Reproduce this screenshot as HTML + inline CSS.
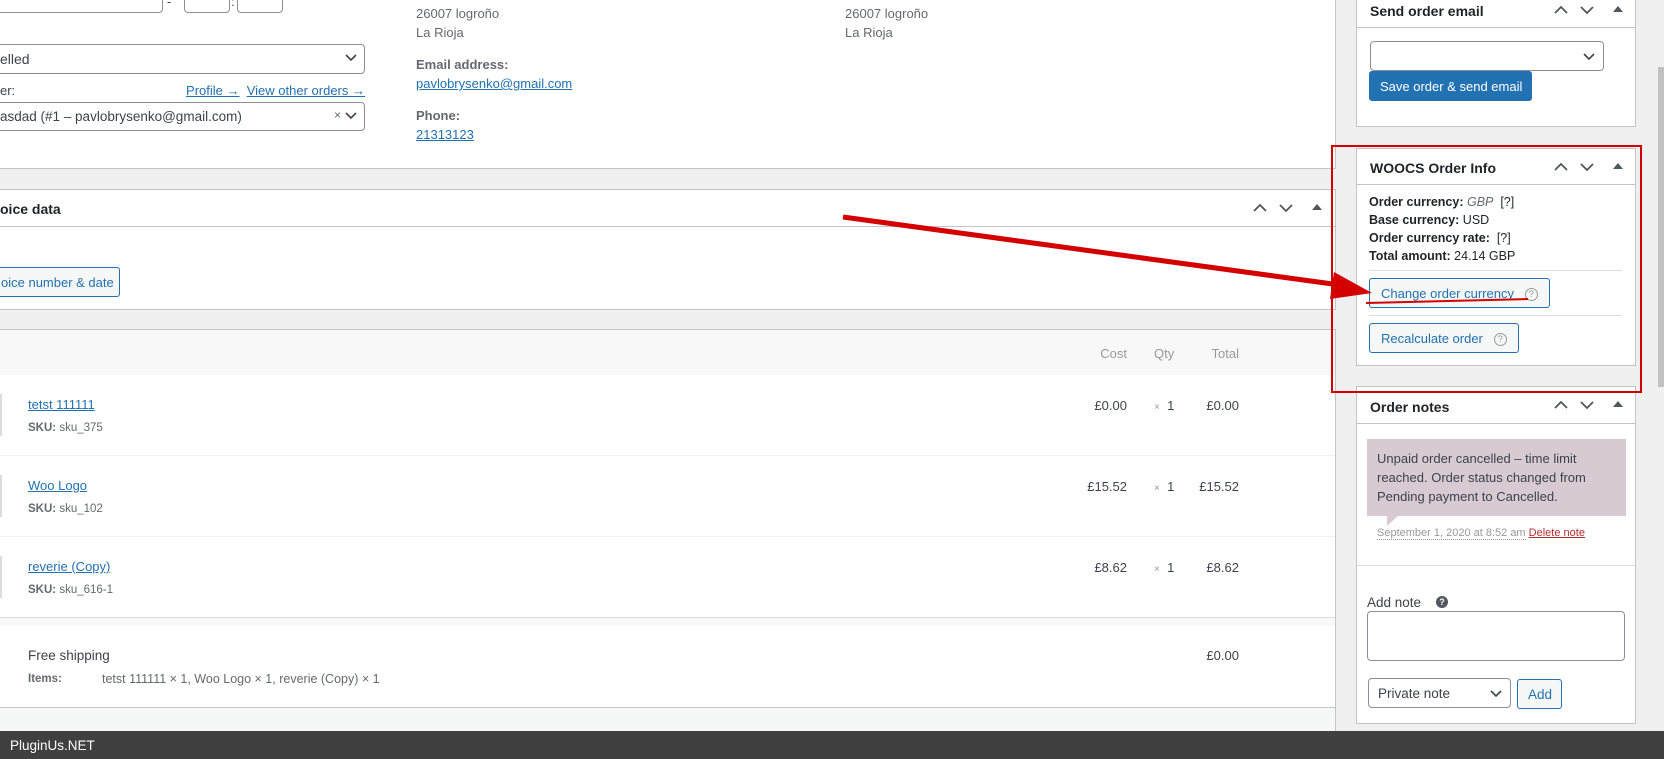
<!DOCTYPE html>
<html><head><meta charset="utf-8"><style>
*{box-sizing:border-box;margin:0;padding:0}
body{width:1664px;height:759px;overflow:hidden;background:#f0f0f1;font-family:"Liberation Sans",sans-serif;font-size:13px;color:#3c434a;position:relative}
.a{position:absolute;white-space:nowrap}
.w{position:absolute;background:#fff}
.bd{border:1px solid #c3c4c7}
a,.lk{color:#2271b1;text-decoration:underline}
.in{position:absolute;border:1px solid #8c8f94;border-radius:4px;background:#fff}
.btn{position:absolute;border:1px solid #2271b1;border-radius:3px;background:#f6f7f7;color:#2271b1;font-size:13px;white-space:nowrap}
.gr{color:#646970}
.q{display:inline-block;width:13px;height:13px;border:1.5px solid #999;border-radius:50%;font-size:9px;line-height:10px;text-align:center;color:#999;vertical-align:middle}
.bold{font-weight:bold}
</style></head><body>
<!-- main panel -->
<div class="w" style="left:0;top:-2px;width:1336px;height:171px;border-right:1px solid #c3c4c7;border-bottom:1px solid #c3c4c7"></div>
<div class="in" style="left:-10px;top:-10px;width:173px;height:23px"></div>
<div class="a" style="left:167px;top:-6px">-</div>
<div class="in" style="left:184px;top:-10px;width:46px;height:23px"></div>
<div class="a" style="left:231px;top:-6px">:</div>
<div class="in" style="left:237px;top:-10px;width:46px;height:23px"></div>
<div class="in" style="left:-10px;top:44px;width:375px;height:30px"></div>
<div class="a" style="left:0;top:51px;font-size:14px">elled</div>
<svg class="a" style="left:344px;top:53px" width="14" height="10"><path d="M2 2l5 5 5-5" stroke="#3c434a" stroke-width="1.6" fill="none"/></svg>
<div class="a" style="left:0;top:83px">er:</div>
<div class="a" style="left:150px;top:83px;width:215px;text-align:right"><span class="lk">Profile →</span>&nbsp; <span class="lk">View other orders →</span></div>
<div class="in" style="left:-10px;top:102px;width:375px;height:29px"></div>
<div class="a" style="left:0;top:109px;font-size:13.5px">asdad (#1 – pavlobrysenko@gmail.com)</div>
<div class="a gr" style="left:334px;top:108px;font-size:12px">×</div>
<svg class="a" style="left:344px;top:111px" width="14" height="10"><path d="M2 2l5 5 5-5" stroke="#3c434a" stroke-width="1.6" fill="none"/></svg>
<div class="a gr" style="left:416px;top:6px">26007 logroño</div>
<div class="a gr" style="left:416px;top:25px">La Rioja</div>
<div class="a gr bold" style="left:416px;top:57px">Email address:</div>
<div class="a lk" style="left:416px;top:76px">pavlobrysenko@gmail.com</div>
<div class="a gr bold" style="left:416px;top:108px">Phone:</div>
<div class="a lk" style="left:416px;top:127px">21313123</div>
<div class="a gr" style="left:845px;top:6px">26007 logroño</div>
<div class="a gr" style="left:845px;top:25px">La Rioja</div>

<!-- invoice data -->
<div class="w" style="left:0;top:189px;width:1336px;height:121px;border:1px solid #c3c4c7;border-left:0"></div>
<div class="a" style="left:0;top:226px;width:1335px;border-top:1px solid #c3c4c7"></div>
<div class="a bold" style="left:0;top:201px;color:#1d2327;font-size:14px">oice data</div>
<svg class="a" style="left:1252px;top:201px" width="80" height="14"><path d="M2 10l6-6 6 6M28 4l6 6 6-6" stroke="#50575e" stroke-width="1.8" fill="none"/><path d="M60 9l5-6 5 6z" fill="#50575e"/></svg>
<div class="btn" style="left:-10px;top:267px;width:130px;height:30px;padding:7px 0 0 10px">oice number &amp; date</div>

<!-- items -->
<div class="w" style="left:0;top:329px;width:1336px;height:379px;border:1px solid #c3c4c7;border-left:0"></div>
<div class="a" style="left:0;top:330px;width:1335px;height:45px;background:#f8f8f8"></div>
<div class="a" style="left:1090px;top:346px;width:37px;text-align:right;color:#999">Cost</div>
<div class="a" style="left:1154px;top:346px;color:#999">Qty</div>
<div class="a" style="left:1200px;top:346px;width:39px;text-align:right;color:#999">Total</div>
<div class="a" style="left:0;top:455px;width:1335px;border-top:1px solid #f0f0f1"></div>
<div class="a" style="left:0;top:536px;width:1335px;border-top:1px solid #f0f0f1"></div>
<div class="a" style="left:0;top:617px;width:1335px;height:9px;background:#f8f8f8;border-top:1px solid #dcdcde"></div>
<div class="a" style="left:0;top:394px;width:2px;height:42px;background:#ddd"></div>
<div class="a" style="left:0;top:475px;width:2px;height:42px;background:#ddd"></div>
<div class="a" style="left:0;top:556px;width:2px;height:42px;background:#ddd"></div>
<div class="a lk" style="left:28px;top:397px">tetst 111111</div>
<div class="a gr" style="left:28px;top:422px;font-size:11.5px"><b>SKU:</b> sku_375</div>
<div class="a lk" style="left:28px;top:478px">Woo Logo</div>
<div class="a gr" style="left:28px;top:503px;font-size:11.5px"><b>SKU:</b> sku_102</div>
<div class="a lk" style="left:28px;top:559px">reverie (Copy)</div>
<div class="a gr" style="left:28px;top:584px;font-size:11.5px"><b>SKU:</b> sku_616-1</div>
<div class="a" style="left:1060px;top:398px;width:67px;text-align:right">£0.00</div>
<div class="a" style="left:1154px;top:398px"><span style="font-size:10px;color:#999">×</span>&nbsp; 1</div>
<div class="a" style="left:1180px;top:398px;width:59px;text-align:right">£0.00</div>
<div class="a" style="left:1060px;top:479px;width:67px;text-align:right">£15.52</div>
<div class="a" style="left:1154px;top:479px"><span style="font-size:10px;color:#999">×</span>&nbsp; 1</div>
<div class="a" style="left:1180px;top:479px;width:59px;text-align:right">£15.52</div>
<div class="a" style="left:1060px;top:560px;width:67px;text-align:right">£8.62</div>
<div class="a" style="left:1154px;top:560px"><span style="font-size:10px;color:#999">×</span>&nbsp; 1</div>
<div class="a" style="left:1180px;top:560px;width:59px;text-align:right">£8.62</div>
<div class="a" style="left:28px;top:648px;font-size:13.5px">Free shipping</div>
<div class="a gr bold" style="left:28px;top:673px;font-size:11.5px">Items:</div>
<div class="a gr" style="left:102px;top:672px;font-size:12.5px">tetst 111111 × 1, Woo Logo × 1, reverie (Copy) × 1</div>
<div class="a" style="left:1180px;top:648px;width:59px;text-align:right">£0.00</div>
<div class="a" style="left:0;top:708px;width:1336px;height:23px;background:#f6f7f7;border-right:1px solid #c3c4c7"></div>

<!-- sidebar: send email -->
<div class="w bd" style="left:1356px;top:-2px;width:280px;height:129px"></div>
<div class="a" style="left:1357px;top:27px;width:278px;border-top:1px solid #c3c4c7"></div>
<div class="a bold" style="left:1370px;top:3px;color:#1d2327;font-size:14px">Send order email</div>
<svg class="a" style="left:1553px;top:3px" width="80" height="14"><path d="M2 10l6-6 6 6M28 4l6 6 6-6" stroke="#50575e" stroke-width="1.8" fill="none"/><path d="M60 9l5-6 5 6z" fill="#50575e"/></svg>
<div class="in" style="left:1370px;top:41px;width:234px;height:30px"></div>
<svg class="a" style="left:1582px;top:52px" width="14" height="10"><path d="M2 2l5 5 5-5" stroke="#3c434a" stroke-width="1.6" fill="none"/></svg>
<div class="a" style="left:1369px;top:71px;width:163px;height:30px;background:#2271b1;border-radius:3px;color:#fff;padding:8px 0 0 11px;font-size:13px">Save order &amp; send email</div>

<!-- woocs -->
<div class="w bd" style="left:1356px;top:148px;width:280px;height:218px"></div>
<div class="a" style="left:1357px;top:184px;width:278px;border-top:1px solid #c3c4c7"></div>
<div class="a bold" style="left:1370px;top:160px;color:#1d2327;font-size:14px">WOOCS Order Info</div>
<svg class="a" style="left:1553px;top:160px" width="80" height="14"><path d="M2 10l6-6 6 6M28 4l6 6 6-6" stroke="#50575e" stroke-width="1.8" fill="none"/><path d="M60 9l5-6 5 6z" fill="#50575e"/></svg>
<div class="a" style="left:1369px;top:193px;font-size:12.5px;line-height:18px;color:#1d2327">
<div><b>Order currency:</b> <i class="gr">GBP</i> &nbsp;[?]</div>
<div><b>Base currency:</b> USD</div>
<div><b>Order currency rate:</b> &nbsp;[?]</div>
<div><b>Total amount:</b> 24.14 GBP</div></div>
<div class="a" style="left:1369px;top:270px;width:253px;border-top:1px solid #dcdcde"></div>
<div class="btn" style="left:1369px;top:278px;width:181px;height:30px;padding:7px 0 0 11px">Change order currency &nbsp;&nbsp;<span class="q">?</span></div>
<div class="a" style="left:1369px;top:315px;width:253px;border-top:1px solid #dcdcde"></div>
<div class="btn" style="left:1369px;top:323px;width:150px;height:30px;padding:7px 0 0 11px">Recalculate order &nbsp;&nbsp;<span class="q">?</span></div>

<!-- order notes -->
<div class="w bd" style="left:1356px;top:386px;width:280px;height:338px"></div>
<div class="a" style="left:1357px;top:423px;width:278px;border-top:1px solid #c3c4c7"></div>
<div class="a bold" style="left:1370px;top:399px;color:#1d2327;font-size:14px">Order notes</div>
<svg class="a" style="left:1553px;top:398px" width="80" height="14"><path d="M2 10l6-6 6 6M28 4l6 6 6-6" stroke="#50575e" stroke-width="1.8" fill="none"/><path d="M60 9l5-6 5 6z" fill="#50575e"/></svg>
<div class="a" style="left:1367px;top:439px;width:259px;height:77px;background:#d7cad2;padding:10px 10px;line-height:19px;white-space:normal;font-size:13px">Unpaid order cancelled – time limit reached. Order status changed from Pending payment to Cancelled.</div>
<svg class="a" style="left:1387px;top:516px" width="12" height="10"><path d="M0 0h11L0 10z" fill="#d7cad2"/></svg>
<div class="a gr" style="left:1377px;top:527px;font-size:11px"><span style="border-bottom:1px dotted #999;color:#999">September 1, 2020 at 8:52 am</span> <span style="color:#b32d2e;text-decoration:underline">Delete note</span></div>
<div class="a" style="left:1357px;top:565px;width:278px;border-top:1px solid #dcdcde"></div>
<div class="a" style="left:1367px;top:595px;font-size:13.5px">Add note</div>
<div class="a" style="left:1436px;top:596px;width:12px;height:12px;border-radius:50%;background:#50575e;color:#fff;font-size:9px;text-align:center;line-height:12px;font-weight:bold">?</div>
<div class="in" style="left:1367px;top:611px;width:258px;height:50px"></div>
<div class="in" style="left:1368px;top:678px;width:143px;height:30px;padding:7px 0 0 9px;font-size:13.5px">Private note</div>
<svg class="a" style="left:1489px;top:689px" width="14" height="10"><path d="M2 2l5 5 5-5" stroke="#3c434a" stroke-width="1.6" fill="none"/></svg>
<div class="btn" style="left:1517px;top:679px;width:45px;height:30px;padding:7px 0 0 10px;font-size:13.5px">Add</div>

<!-- scrollbar -->
<div class="a" style="left:1658px;top:67px;width:6px;height:320px;background:#c1c1c1"></div>

<!-- red annotations -->
<div class="a" style="left:1331px;top:145px;width:311px;height:248px;border:2px solid #d40000"></div>
<svg class="a" style="left:0;top:0" width="1664" height="759">
<path d="M843 217L1340 285" stroke="#d40000" stroke-width="5"/>
<path d="M1372 293L1334 272L1330 299z" fill="#d40000"/>
<path d="M1366 303L1528 299" stroke="#d40000" stroke-width="2"/>
</svg>

<div class="a" style="left:0;top:731px;width:1664px;height:28px;background:#404040;color:#fff;padding:7px 0 0 10px;font-size:13.5px">PluginUs.NET</div>
</body></html>
